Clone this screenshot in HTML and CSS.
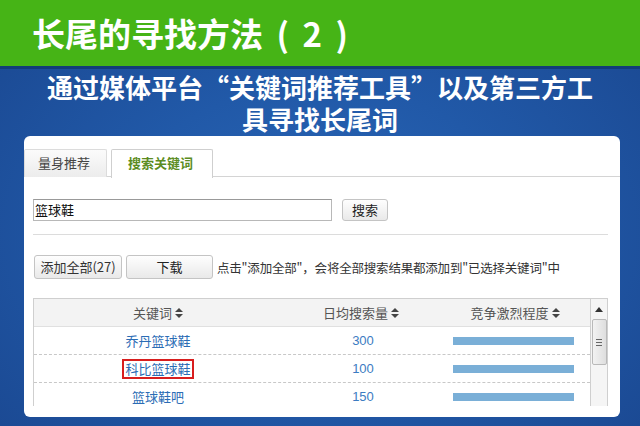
FILE: index.html
```html
<!DOCTYPE html>
<html lang="zh-CN">
<head>
<meta charset="utf-8">
<link rel="stylesheet" href="styles.css">
</head>
<body>
<div class="slide">
  <header class="title">长尾的寻找方法 ( 2 )</header>
  <h2 class="subtitle">通过媒体平台“关键词推荐工具”以及第三方工<br>具寻找长尾词</h2>
  <section class="panel">
    <nav class="tabs">
      <div class="tab">量身推荐</div>
      <div class="tab active">搜索关键词</div>
    </nav>
    <div class="search-row">
      <div class="input">篮球鞋</div>
      <div class="btn btn-search">搜索</div>
    </div>
    <div class="actions">
      <div class="btn btn-add">添加全部(27)</div>
      <div class="btn btn-dl">下载</div>
      <span class="hint">点击"添加全部"，会将全部搜索结果都添加到"已选择关键词"中</span>
    </div>
    <div class="table">
      <div class="grid">
        <div class="row head">
          <div class="c c1">关键词<svg class="sort" viewBox="0 0 8 10" width="8" height="10"><path d="M4 0 L8 4 L0 4 Z M4 10 L8 6 L0 6 Z" fill="#444"/></svg></div>
          <div class="c c2">日均搜索量<svg class="sort" viewBox="0 0 8 10" width="8" height="10"><path d="M4 0 L8 4 L0 4 Z M4 10 L8 6 L0 6 Z" fill="#444"/></svg></div>
          <div class="c c3">竞争激烈程度<svg class="sort" viewBox="0 0 8 10" width="8" height="10"><path d="M4 0 L8 4 L0 4 Z M4 10 L8 6 L0 6 Z" fill="#444"/></svg></div>
        </div>
        <div class="row">
          <div class="c c1 kw">乔丹篮球鞋</div>
          <div class="c c2 num">300</div>
          <div class="c c3"><div class="bar"></div></div>
        </div>
        <div class="row">
          <div class="c c1 kw"><span class="mark">科比篮球鞋</span></div>
          <div class="c c2 num">100</div>
          <div class="c c3"><div class="bar"></div></div>
        </div>
        <div class="row">
          <div class="c c1 kw">篮球鞋吧</div>
          <div class="c c2 num">150</div>
          <div class="c c3"><div class="bar"></div></div>
        </div>
      </div>
      <div class="scrollbar">
        <div class="sb-up"><svg viewBox="0 0 8 5" width="8" height="5"><path d="M4 0 L8 5 L0 5 Z" fill="#333"/></svg></div>
        <div class="sb-thumb"><span></span><span></span><span></span></div>
      </div>
    </div>
  </section>
</div>
</body>
</html>
```

FILE: styles.css
```css
* { box-sizing: border-box; margin: 0; padding: 0; }
html, body { width: 640px; height: 426px; overflow: hidden; }
body {
  font-family: "Noto Sans CJK SC", "Noto Sans", sans-serif;
  background: #1b4b98;
}
.slide {
  width: 640px;
  height: 426px;
  display: flex;
  flex-direction: column;
  background:
    radial-gradient(ellipse at 50% 55%, #2a66b6 0%, #2159a8 45%, #1a4790 100%);
}
.title {
  height: 69px;
  background: #46b416;
  border-bottom: 3px solid #123d78;
  color: #fff;
  font-size: 33px;
  font-weight: 700;
  line-height: 66px;
  padding-left: 32px;
  word-spacing: 6px;
  white-space: pre;
}
.subtitle {
  margin-top: 2px;
  color: #fff;
  font-size: 26px;
  font-weight: 700;
  line-height: 32px;
  text-align: center;
}
.panel {
  margin: 1px 20px 0 24px;
  height: 281px;
  background: #fff;
  border-radius: 6px;
  padding: 13px 12px 0 0;
  display: flex;
  flex-direction: column;
  color: #333;
  font-size: 13px;
}
.tabs {
  display: flex;
  gap: 4px;
  height: 28px;
  border-bottom: 1px solid #d4d4d4;
  margin-right: -12px;
}
.tab {
  width: 83px;
  height: 28px;
  border: 1px solid #dcdcdc;
  border-bottom: none;
  border-radius: 2px 2px 0 0;
  background: linear-gradient(#fbfbfb, #ececec);
  color: #444;
  font-size: 13px;
  line-height: 26px;
  padding-left: 13px;
}
.tab.active {
  width: 102px;
  background: #fff;
  border-color: #cfcfcf;
  color: #5b8c22;
  font-weight: 700;
  padding-left: 16px;
  margin-bottom: -1px;
  height: 29px;
}
.search-row {
  display: flex;
  align-items: center;
  margin: 22px 0 0 9px;
  padding-bottom: 13px;
  border-bottom: 1px solid #dcdcdc;
  gap: 10px;
}
.input {
  width: 299px;
  height: 22px;
  border: 1px solid #b8b8b8;
  border-top-color: #999;
  font-size: 13px;
  color: #111;
  line-height: 20px;
  padding-left: 1px;
}
.btn {
  height: 22px;
  border: 1px solid #c4c4c4;
  border-radius: 3px;
  background: linear-gradient(#fefefe, #e9e9e9);
  color: #222;
  font-size: 13px;
  line-height: 20px;
  text-align: center;
}
.btn-search { width: 46px; }
.actions {
  display: flex;
  align-items: center;
  margin: 20px 0 0 10px;
  gap: 4px;
}
.actions .btn { height: 24px; line-height: 22px; }
.btn-add { width: 88px; color: #333; }
.btn-dl { width: 87px; }
.hint { color: #333; font-size: 12.5px; letter-spacing: -0.2px; }
.table {
  margin: 19px 0 0 9px;
  height: 108px;
  display: flex;
  overflow: hidden;
}
.grid {
  flex: 1;
  border-left: 1px solid #cfcfcf;
  border-top: 1px solid #cfcfcf;
}
.row {
  display: flex;
  height: 28px;
  border-bottom: 1px dashed #c8c8c8;
  align-items: center;
}
.row.head {
  background: #f3f3f3;
  border-bottom: 1px solid #e0e0e0;
  color: #555;
}
.c {
  display: flex;
  align-items: center;
  justify-content: center;
  height: 100%;
}
.c1 { width: 248px; }
.c2 { width: 158px; }
.c3 { flex: 1; }
.sort { margin-left: 3px; }
.kw { color: #2b6cb5; }
.num { color: #3c7cc2; font-family: "Liberation Sans", Arial, sans-serif; font-size: 13px; padding-left: 4px; }
.mark {
  border: 2px solid #d81e1e;
  padding: 0 1px;
  line-height: 16px;
}
.bar {
  width: 121px;
  height: 8px;
  background: #7aafd7;
  margin-left: -3px;
}
.scrollbar {
  width: 18px;
  border: 1px solid #cfcfcf;
  border-bottom: none;
  background: #f5f5f5;
  display: flex;
  flex-direction: column;
  align-items: center;
}
.sb-up {
  height: 20px;
  display: flex;
  align-items: center;
  justify-content: center;
}
.sb-thumb {
  width: 15px;
  height: 46px;
  border: 1px solid #b9b9b9;
  border-radius: 2px;
  background: linear-gradient(90deg, #f2f2f2, #dedede);
  display: flex;
  flex-direction: column;
  align-items: center;
  justify-content: center;
  gap: 2px;
}
.sb-thumb span {
  width: 6px;
  height: 1px;
  background: #666;
}
```
